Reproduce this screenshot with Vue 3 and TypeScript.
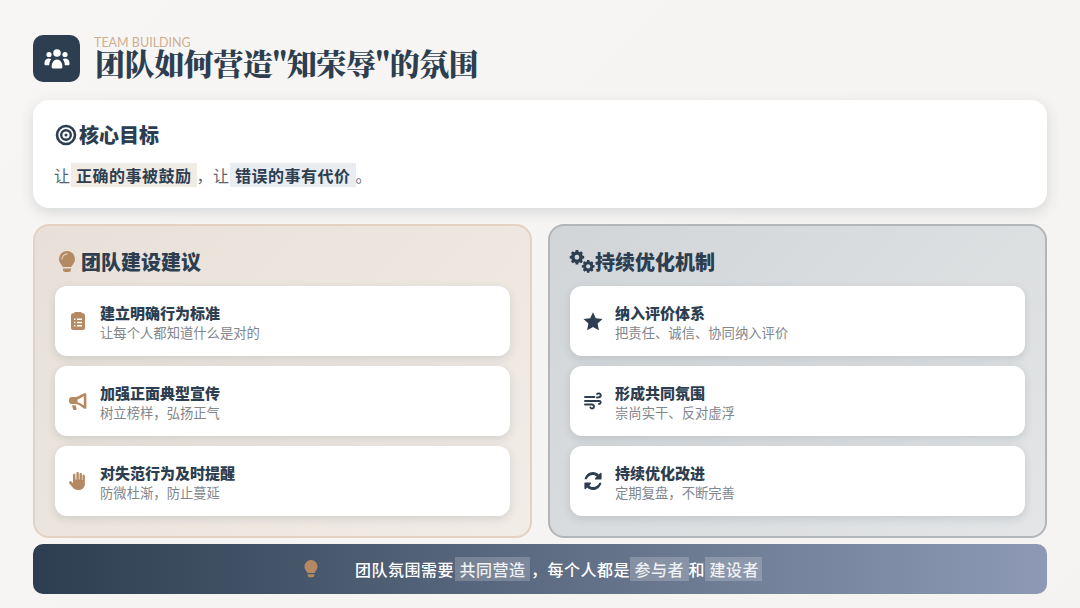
<script setup lang="ts">
interface Item { icon: string; title: string; sub: string }
const left: Item[] = [
  { icon: 'clip', title: '建立明确行为标准', sub: '让每个人都知道什么是对的' },
  { icon: 'horn', title: '加强正面典型宣传', sub: '树立榜样，弘扬正气' },
  { icon: 'hand', title: '对失范行为及时提醒', sub: '防微杜渐，防止蔓延' },
]
const right: Item[] = [
  { icon: 'star', title: '纳入评价体系', sub: '把责任、诚信、协同纳入评价' },
  { icon: 'wind', title: '形成共同氛围', sub: '崇尚实干、反对虚浮' },
  { icon: 'sync', title: '持续优化改进', sub: '定期复盘，不断完善' },
]
</script>

<template>
  <div class="page">
    <header class="head">
      <div class="logo">
        <svg width="26" height="22" viewBox="0 0 26 22" fill="#fff">
          <circle cx="13" cy="5" r="3.800" />
          <circle cx="5" cy="6.500" r="2.600" />
          <circle cx="21" cy="6.500" r="2.600" />
          <path d="M7.600 19c0-4.400 2.200-7.600 5.400-7.600s5.400 3.200 5.400 7.600c0 .8-.6 1.400-1.400 1.400H9c-.8 0-1.400-.6-1.400-1.400z" />
          <path d="M.5 15C.5 12.200 2.400 10.500 4.800 10.500c1 0 1.800.3 2.400.8-1.300 1.500-2 3.600-2 6H2C1.100 17.300.5 16.700.5 15.900z" />
          <path d="M25.500 15C25.500 12.200 23.600 10.500 21.200 10.500c-1 0-1.800.3-2.400.8 1.300 1.500 2 3.600 2 6H24c.9 0 1.500-.6 1.500-1.400z" />
        </svg>
      </div>
      <div class="head-text">
        <div class="eyebrow">TEAM BUILDING</div>
        <h1 class="title">团队如何营造"知荣辱"的氛围</h1>
      </div>
    </header>

    <section class="goal">
      <h2 class="h2 goal-h">
        <svg width="22" height="22" viewBox="0 0 22 22" fill="none" stroke="#2c3e50">
          <circle cx="11" cy="11" r="9" stroke-width="2.600" />
          <circle cx="11" cy="11" r="4.800" stroke-width="2.400" />
          <circle cx="11" cy="11" r="1.500" fill="#2c3e50" stroke="none" />
        </svg>
        核心目标
      </h2>
      <p class="goal-p">让<span class="mark warm">正确的事被鼓励</span>，让<span class="mark cool">错误的事有代价</span>。</p>
    </section>

    <div class="cols">
      <section class="col col-l">
        <h2 class="h2 col-h col-h-l">
          <svg width="16" height="22" viewBox="0 0 16 22" fill="#b58a63">
            <path d="M8 0a8 8 0 0 0-8 8c0 2.200.9 3.800 2 5.200.8 1 1.500 2 1.700 2.800h8.600c.2-.8.900-1.800 1.700-2.800C15.100 11.800 16 10.200 16 8a8 8 0 0 0-8-8z" />
            <path d="M4 17.500h8v1.200a2.300 2.300 0 0 1-2.300 2.300H6.300A2.300 2.300 0 0 1 4 18.700z" />
            <path d="M3 8a5 5 0 0 1 5-5" fill="none" stroke="#dcc4ad" stroke-width="1.300" stroke-linecap="round" />
          </svg>
          团队建设建议
        </h2>
        <div v-for="it in left" :key="it.title" class="item">
          <span class="ic ic-l">
            <svg v-if="it.icon === 'clip'" width="14" height="18" viewBox="0 0 14 18" fill="#b58a63">
              <path fill-rule="evenodd" d="M4.500 0h5c.7 0 1.300.5 1.400 1.200H12c1.100 0 2 .9 2 2V16c0 1.100-.9 2-2 2H2c-1.100 0-2-.9-2-2V3.200c0-1.100.9-2 2-2h1.100C3.200.5 3.800 0 4.500 0zM3 6.500v1.400h1.400V6.500zm3 0v1.400h5V6.500zM3 9.800v1.400h1.400V9.800zm3 0v1.400h5V9.800zm-3 3.300v1.400h1.400v-1.400zm3 0v1.400h5v-1.400z" />
            </svg>
            <svg v-else-if="it.icon === 'horn'" width="18" height="17" viewBox="0 0 18 17" fill="#b58a63">
              <path fill-rule="evenodd" d="M15.200 .3h1.300c.5 0 .9.400.9.900v13.600c0 .5-.4.900-.9.900h-1.300l-3.400-2.500C10.300 12 8.700 11.300 7 11.100H2.800C1.300 11.100 0 9.800 0 8.200V6.800C0 5.200 1.300 3.900 2.800 3.900H7c1.700-.2 3.300-.9 4.800-2.100zM14.800 3.100l-1.700 1.200C11.700 5.400 10.100 6.100 8.500 6.400v2.800c1.600.3 3.200 1 4.600 2.100l1.700 1.200z" />
              <path d="M3 12.200h3.600l1 3.400c.2.700-.3 1.400-1 1.400H5.200c-.6 0-1.100-.4-1.200-1z" />
            </svg>
            <svg v-else width="18" height="18" viewBox="0 0 18 18" fill="#b58a63">
              <path d="M8.600 0c.7 0 1.200.5 1.200 1.200v6.200h.7V2.200c0-.7.500-1.200 1.200-1.200s1.200.5 1.200 1.200v5.900h.6V4c0-.7.500-1.200 1.200-1.200s1.200.5 1.200 1.200v8c0 3.300-2.700 6-6 6H9c-2.300 0-4.200-1-5.500-2.700L.4 11.500c-.6-.6-.5-1.500.1-2 .6-.5 1.400-.4 1.900.1L4 11.200V3c0-.7.500-1.200 1.200-1.200S6.400 2.300 6.400 3v4.400h1V1.200C7.400.5 7.900 0 8.600 0z" />
            </svg>
          </span>
          <div class="txt">
            <div class="t">{{ it.title }}</div>
            <div class="s">{{ it.sub }}</div>
          </div>
        </div>
      </section>

      <section class="col col-r">
        <h2 class="h2 col-h col-h-r">
          <svg width="26" height="24" viewBox="0 0 26 24" fill="#2c3e50">
            <path fill-rule="evenodd" d="M6 0h3l.4 1.900 1.300.6 1.700-1 2 2-1 1.700.6 1.300 1.900.4v3l-1.900.4-.6 1.300 1 1.700-2 2-1.700-1-1.300.6L9 16.800H6l-.4-1.900-1.300-.6-1.700 1-2-2 1-1.700-.6-1.300L-.9 9.900v-3l1.900-.4.600-1.300-1-1.700 2-2 1.700 1 1.300-.6zM7.500 5.600a2.800 2.800 0 1 0 0 5.600 2.800 2.800 0 0 0 0-5.600z" transform="translate(1.500 0) scale(.86)" />
            <path fill-rule="evenodd" d="M6 0h3l.4 1.900 1.300.6 1.700-1 2 2-1 1.700.6 1.300 1.900.4v3l-1.900.4-.6 1.300 1 1.700-2 2-1.700-1-1.300.6L9 16.800H6l-.4-1.900-1.300-.6-1.700 1-2-2 1-1.700-.6-1.300L-.9 9.900v-3l1.900-.4.600-1.300-1-1.700 2-2 1.700 1 1.300-.6zM7.500 5.600a2.800 2.800 0 1 0 0 5.600 2.800 2.800 0 0 0 0-5.600z" transform="translate(13.500 10) scale(.76)" />
          </svg>
          持续优化机制
        </h2>
        <div v-for="it in right" :key="it.title" class="item">
          <span class="ic ic-r">
            <svg v-if="it.icon === 'star'" width="20" height="19" viewBox="0 0 20 19" fill="#2c3e50">
              <path d="M10 .3l2.800 6 6.700.8-4.900 4.500 1.300 6.600L10 14.900l-5.900 3.300 1.300-6.600L.5 7.100l6.700-.8z" />
            </svg>
            <svg v-else-if="it.icon === 'wind'" width="18" height="18" viewBox="0 0 18 18" fill="none" stroke="#2c3e50" stroke-width="1.900" stroke-linecap="round">
              <path d="M1 5.500h9.500M13 2.500c1.200-1 3.800-.8 3.800 1.200S14.500 6 13 6" transform="translate(0 -.5)" />
              <path d="M1 9h14.500c1.500 0 1.800 2.800-.5 3" />
              <path d="M1 12.500h7c2.400 0 2.600 3.800.3 4-1 .1-1.700-.5-1.900-1" />
            </svg>
            <svg v-else width="18" height="18" viewBox="0 0 18 18" fill="#2c3e50">
              <path d="M2.700 7.300H.6C1.200 3.200 4.700 0 9 0c2.300 0 4.400.9 5.900 2.400L16.300 1c.5-.5 1.300-.1 1.300.5v5.300c0 .4-.3.700-.7.700h-5.300c-.6 0-1-.8-.5-1.300l1.600-1.600C11.700 3.500 10.400 2.900 9 2.900c-3 0-5.500 2-6.300 4.400z" />
              <path d="M15.300 10.700h2.100C16.800 14.800 13.300 18 9 18c-2.300 0-4.400-.9-5.900-2.400L1.700 17c-.5.500-1.300.1-1.300-.5v-5.300c0-.4.300-.7.700-.7h5.300c.6 0 1 .8.500 1.300l-1.600 1.600c1 1.100 2.300 1.700 3.700 1.700 3 0 5.500-2 6.300-4.400z" />
            </svg>
          </span>
          <div class="txt">
            <div class="t">{{ it.title }}</div>
            <div class="s">{{ it.sub }}</div>
          </div>
        </div>
      </section>
    </div>

    <footer class="foot">
      <svg class="foot-ic" width="14" height="18" viewBox="0 0 16 22" fill="#b58a63">
        <path d="M8 0a8 8 0 0 0-8 8c0 2.200.9 3.800 2 5.200.8 1 1.500 2 1.700 2.800h8.600c.2-.8.900-1.800 1.700-2.800C15.100 11.800 16 10.200 16 8a8 8 0 0 0-8-8z" />
        <path d="M4 17.500h8v1.200a2.300 2.300 0 0 1-2.300 2.300H6.300A2.300 2.300 0 0 1 4 18.700z" />
      </svg>
      <span class="foot-txt">团队氛围需要<span class="fm fm-a">共同营造</span>，每个人都是<span class="fm">参与者</span>和<span class="fm fm-c">建设者</span></span>
    </footer>
  </div>
</template>

<style>
html, body { margin: 0; background: #f7f5f3; }
</style>

<style scoped>
.page {
  width: 1080px;
  height: 608px;
  box-sizing: border-box;
  padding: 35px 33px 14px;
  display: flex;
  flex-direction: column;
  background: linear-gradient(135deg, #f8f6f4, #f5f3f1);
  font-family: "Noto Sans CJK SC", sans-serif;
  color: #2c3e50;
  overflow: hidden;
}
.head { display: flex; align-items: flex-start; gap: 14px; height: 47px; margin-bottom: 18px; }
.logo {
  width: 47px; height: 47px; border-radius: 10px; background: #2c3e50;
  display: flex; align-items: center; justify-content: center; flex: none;
}
.head-text { display: flex; flex-direction: column; margin-top: 2px; }
.eyebrow {
  font-family: "Lato", sans-serif; font-size: 12.500px; line-height: 11px; color: #cfae90;
}
.title {
  margin: -1px 0 0 1px;
  font-family: "Noto Serif CJK SC", "Noto Sans CJK SC", serif;
  font-size: 30px; line-height: 30px; font-weight: 900; color: #2c3e50; white-space: nowrap; letter-spacing: -.4px;
}
.goal {
  height: 108px; box-sizing: border-box; background: #fff; border-radius: 16px;
  padding: 22px 22px 0 21px; box-shadow: 0 4px 14px rgba(44, 62, 80, .16); margin-bottom: 16px;
}
.h2 { margin: 0; font-size: 20px; line-height: 26px; font-weight: 900; color: #2c3e50; display: flex; align-items: center; }
.goal-h { gap: 2px; margin-bottom: 14px; margin-left: 1px; }
.goal-p { margin: 0; font-size: 16px; line-height: 26px; color: #59636d; letter-spacing: .5px; white-space: nowrap; }
.mark { font-weight: 700; color: #2c3e50; padding: 0 5px 0 5.500px; }
.warm { background: #f1ebe6; }
.cool { background: #e9ecf0; }
.cols { display: flex; gap: 16px; height: 314px; }
.col {
  flex: 1; box-sizing: border-box; border-radius: 16px; border: 2px solid; padding: 23px 20px 0;
  display: flex; flex-direction: column; gap: 10px;
}
.col-l { background: linear-gradient(135deg, #e8e0d8, #f1ece6); border-color: #e3d2c1; }
.col-r { background: linear-gradient(135deg, #d2d5d8, #e3e5e6); border-color: #b3b6b9; }
.col-h { height: 26px; margin-bottom: 1px; }
.col-h-l { padding-left: 4px; gap: 6px; }
.col-h-r { gap: 0; margin-left: -1px; }
.item {
  height: 70px; box-sizing: border-box; background: #fff; border-radius: 12px;
  display: flex; align-items: center; padding-left: 13px;
  box-shadow: 0 3px 8px rgba(44, 62, 80, .14);
}
.ic { width: 20px; height: 20px; display: flex; align-items: center; justify-content: center; margin-right: 12px; flex: none; }
.txt { padding-top: 4px; }
.t { font-size: 15px; line-height: 20px; font-weight: 900; color: #2c3e50; white-space: nowrap; }
.s { font-size: 13.330px; line-height: 20px; color: #7f868c; white-space: nowrap; }
.foot {
  margin-top: 6px; height: 50px; border-radius: 10px; display: flex; align-items: center;
  background: linear-gradient(90deg, #2c3e50, #8e9ab5); padding-left: 271px;
}
.foot-ic { flex: none; margin-right: 37px; }
.foot-txt { font-size: 16px; font-weight: 500; color: #fff; white-space: nowrap; letter-spacing: .5px; }
.fm { background: rgba(255, 255, 255, .2); padding: 0 4.500px; color: #eef0f4; }
.fm-a { margin: 0 1px; }
.fm-c { padding: 0 3px 0 4.500px; }
</style>
